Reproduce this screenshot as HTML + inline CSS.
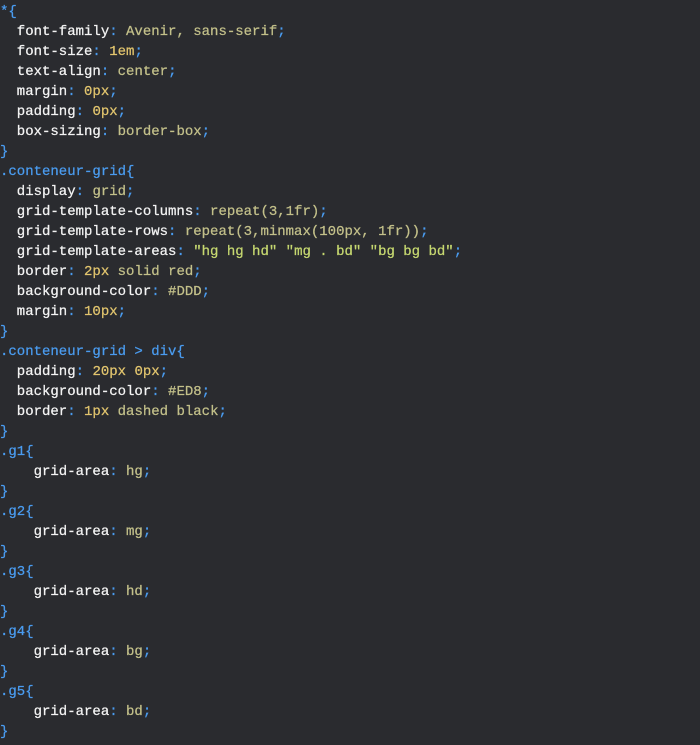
<!DOCTYPE html>
<html><head><style>
html,body{margin:0;padding:0;background:#2a2b2f;width:700px;height:745px;overflow:hidden}
pre{margin:0;padding:2px 0 0 0;font-family:"Liberation Mono",monospace;font-size:14px;line-height:20px;color:#f4f4f4;white-space:pre;-webkit-text-stroke:0.25px currentColor}
.b{color:#4a9cf0}.v{color:#c3c08a}.n{color:#e2c56e}.s{color:#c6d870}
</style></head><body><pre><span class="b">*{</span>
  font-family<span class="b">:</span> <span class="v">Avenir, sans-serif</span><span class="b">;</span>
  font-size<span class="b">:</span> <span class="n">1em</span><span class="b">;</span>
  text-align<span class="b">:</span> <span class="v">center</span><span class="b">;</span>
  margin<span class="b">:</span> <span class="n">0px</span><span class="b">;</span>
  padding<span class="b">:</span> <span class="n">0px</span><span class="b">;</span>
  box-sizing<span class="b">:</span> <span class="v">border-box</span><span class="b">;</span>
<span class="b">}</span>
<span class="b">.conteneur-grid{</span>
  display<span class="b">:</span> <span class="v">grid</span><span class="b">;</span>
  grid-template-columns<span class="b">:</span> <span class="v">repeat(3,1fr)</span><span class="b">;</span>
  grid-template-rows<span class="b">:</span> <span class="v">repeat(3,minmax(100px, 1fr))</span><span class="b">;</span>
  grid-template-areas<span class="b">:</span> <span class="s">"hg hg hd" "mg . bd" "bg bg bd"</span><span class="b">;</span>
  border<span class="b">:</span> <span class="n">2px</span> <span class="v">solid red</span><span class="b">;</span>
  background-color<span class="b">:</span> <span class="v">#DDD</span><span class="b">;</span>
  margin<span class="b">:</span> <span class="n">10px</span><span class="b">;</span>
<span class="b">}</span>
<span class="b">.conteneur-grid &gt; div{</span>
  padding<span class="b">:</span> <span class="n">20px</span> <span class="n">0px</span><span class="b">;</span>
  background-color<span class="b">:</span> <span class="v">#ED8</span><span class="b">;</span>
  border<span class="b">:</span> <span class="n">1px</span> <span class="v">dashed black</span><span class="b">;</span>
<span class="b">}</span>
<span class="b">.g1{</span>
    grid-area<span class="b">:</span> <span class="v">hg</span><span class="b">;</span>
<span class="b">}</span>
<span class="b">.g2{</span>
    grid-area<span class="b">:</span> <span class="v">mg</span><span class="b">;</span>
<span class="b">}</span>
<span class="b">.g3{</span>
    grid-area<span class="b">:</span> <span class="v">hd</span><span class="b">;</span>
<span class="b">}</span>
<span class="b">.g4{</span>
    grid-area<span class="b">:</span> <span class="v">bg</span><span class="b">;</span>
<span class="b">}</span>
<span class="b">.g5{</span>
    grid-area<span class="b">:</span> <span class="v">bd</span><span class="b">;</span>
<span class="b">}</span></pre></body></html>
